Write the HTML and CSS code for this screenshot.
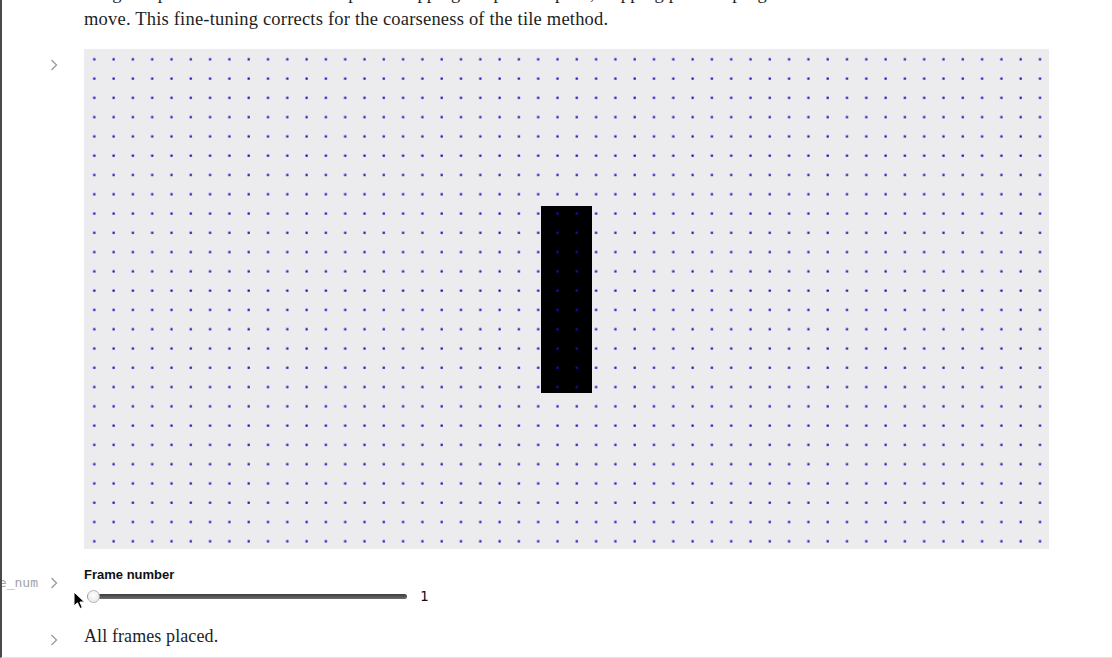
FILE: index.html
```html
<!DOCTYPE html>
<html lang="en">
<head>
<meta charset="utf-8">
<title>Tile placement</title>
<link rel="stylesheet" href="styles.css">
</head>
<body>
<div class="page">
  <section class="cell cell-intro">
    <div class="gutter"></div>
    <div class="body">
      <p class="prose prose-intro">nudged a pixel at a time until it stops overlapping the placed sprite, stepping past the program to<br>move. This fine-tuning corrects for the coarseness of the tile method.</p>
    </div>
  </section>

  <section class="cell cell-canvas">
    <div class="gutter">
      <svg class="chev" width="8" height="12" viewBox="0 0 8 12"><polyline points="1.5,1 6.5,6 1.5,11"/></svg>
    </div>
    <div class="body">
      <svg class="board" width="965" height="500" viewBox="0 0 965 500">
        <defs>
          <pattern id="dots" width="19.3" height="19.28" patternUnits="userSpaceOnUse">
            <rect x="9.2" y="9.2" width="2.2" height="2.2" fill="#1010c0"/>
          </pattern>
        </defs>
        <rect x="0" y="0" width="965" height="500" fill="#ecebee"/>
        <rect x="457" y="157" width="51" height="187" fill="#000"/>
        <rect x="0" y="0" width="965" height="500" fill="url(#dots)"/>
      </svg>
    </div>
  </section>

  <section class="cell cell-slider">
    <div class="gutter">
      <span class="name">frame_num</span>
      <svg class="chev" width="8" height="12" viewBox="0 0 8 12"><polyline points="1.5,1 6.5,6 1.5,11"/></svg>
    </div>
    <div class="body">
      <form class="slider">
        <label class="slider-label" for="frame">Frame number</label>
        <div class="slider-row">
          <input id="frame" type="range" min="1" max="40" step="1" value="1">
          <output class="slider-value">1</output>
        </div>
      </form>
    </div>
  </section>

  <section class="cell cell-result">
    <div class="gutter">
      <svg class="chev" width="8" height="12" viewBox="0 0 8 12"><polyline points="1.5,1 6.5,6 1.5,11"/></svg>
    </div>
    <div class="body">
      <p class="prose prose-result">All frames placed.</p>
    </div>
  </section>

  <svg class="cursor" width="13" height="19" viewBox="0 0 13 19">
    <path d="M1,1 L1,15 L4.5,11.8 L7,17.5 L9.3,16.5 L6.9,11 L11.5,11 Z"/>
  </svg>
</div>
</body>
</html>
```

FILE: styles.css
```css
html, body {
  margin: 0;
  padding: 0;
  background: #ffffff;
}

.page {
  position: relative;
  height: 658px;
  overflow: hidden;
  box-sizing: border-box;
  border-left: 2px solid #4a4a4a;
  border-bottom: 1px solid #e4e4e4;
  background: #ffffff;
}

.cell {
  display: flex;
}

.gutter {
  flex: none;
  box-sizing: border-box;
  width: 82px;
  height: 12px;
  margin-top: 10px;
  padding-right: 26px;
  display: flex;
  justify-content: flex-end;
  align-items: center;
  gap: 12px;
}

.body {
  flex: none;
  width: 965px;
}

.chev {
  flex: none;
  display: block;
}

.chev polyline {
  fill: none;
  stroke: #9a9a9a;
  stroke-width: 1.3;
}

.name {
  flex: none;
  font-family: "DejaVu Sans Mono", "Liberation Mono", monospace;
  font-size: 13px;
  color: #a3a3a3;
  white-space: nowrap;
  line-height: 12px;
}

.prose {
  margin: 0;
  font-family: "Liberation Serif", "Times New Roman", serif;
  font-size: 18.5px;
  letter-spacing: 0.2px;
  line-height: 25px;
  color: #1b1e23;
}

.prose-intro {
  white-space: nowrap;
  line-height: 26px;
}

.prose-result {
  font-size: 18px;
  letter-spacing: 0.1px;
}

.cell-intro .gutter {
  margin-top: 0;
}

.cell-intro .prose {
  margin-top: -20.5px;
}

.cell-canvas {
  margin-top: 17.5px;
}

.board {
  display: block;
}

.cell-slider {
  margin-top: 18px;
}

.slider {
  margin: 0;
  display: flex;
  flex-direction: column;
}

.slider-label {
  font-family: "Liberation Sans", Arial, sans-serif;
  font-weight: bold;
  font-size: 13px;
  line-height: 16px;
  color: #111;
}

.slider-row {
  display: flex;
  align-items: center;
  gap: 13px;
  margin-top: 6px;
  height: 14px;
}

.slider-row input[type=range] {
  -webkit-appearance: none;
  appearance: none;
  width: 320px;
  height: 14px;
  margin: 0 0 0 3px;
  padding: 0;
  background: transparent;
}

.slider-row input[type=range]::-webkit-slider-runnable-track {
  height: 5px;
  border-radius: 3px;
  background: linear-gradient(#3c3c3c, #6e6e6e);
}

.slider-row input[type=range]::-webkit-slider-thumb {
  -webkit-appearance: none;
  appearance: none;
  box-sizing: border-box;
  width: 13px;
  height: 13px;
  margin-top: -4px;
  border-radius: 50%;
  border: 1px solid #b4b4b4;
  background: radial-gradient(circle at 50% 40%, #ffffff, #e2e2e2);
}

.slider-value {
  font-family: "DejaVu Sans Mono", "Liberation Mono", monospace;
  font-size: 14px;
  color: #111;
  line-height: 14px;
}

.cell-result {
  margin-top: 21px;
}

.cursor {
  position: absolute;
  left: 71px;
  top: 591px;
}

.cursor path {
  fill: #000;
  stroke: #fff;
  stroke-width: 1;
  stroke-linejoin: round;
}
```
